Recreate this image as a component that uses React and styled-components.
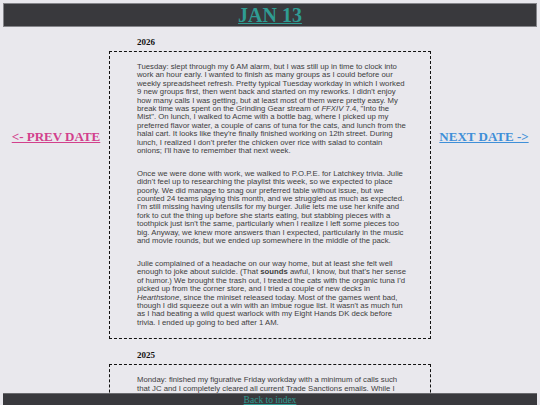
import React from 'react';
import styled, {createGlobalStyle} from 'styled-components';

const entries = [
    {
        year: '2026',
        paragraphs: [
            <>Tuesday: slept through my 6 AM alarm, but I was still up in time to clock into work an hour early. I wanted to finish as many groups as I could before our weekly spreadsheet refresh. Pretty typical Tuesday workday in which I worked 9 new groups first, then went back and started on my reworks. I didn't enjoy how many calls I was getting, but at least most of them were pretty easy. My break time was spent on the Grinding Gear stream of <i>FFXIV</i> 7.4, "Into the Mist". On lunch, I walked to Acme with a bottle bag, where I picked up my preferred flavor water, a couple of cans of tuna for the cats, and lunch from the halal cart. It looks like they're finally finished working on 12th street. During lunch, I realized I don't prefer the chicken over rice with salad to contain onions; I'll have to remember that next week.</>,
            <>Once we were done with work, we walked to P.O.P.E. for Latchkey trivia. Julie didn't feel up to researching the playlist this week, so we expected to place poorly. We did manage to snag our preferred table without issue, but we counted 24 teams playing this month, and we struggled as much as expected. I'm still missing having utensils for my burger. Julie lets me use her knife and fork to cut the thing up before she starts eating, but stabbing pieces with a toothpick just isn't the same, particularly when I realize I left some pieces too big. Anyway, we knew more answers than I expected, particularly in the music and movie rounds, but we ended up somewhere in the middle of the pack.</>,
            <>Julie complained of a headache on our way home, but at least she felt well enough to joke about suicide. (That <b>sounds</b> awful, I know, but that's her sense of humor.) We brought the trash out, I treated the cats with the organic tuna I'd picked up from the corner store, and I tried a couple of new decks in <i>Hearthstone</i>, since the miniset released today. Most of the games went bad, though I did squeeze out a win with an imbue rogue list. It wasn't as much fun as I had beating a wild quest warlock with my Eight Hands DK deck before trivia. I ended up going to bed after 1 AM.</>,
        ],
    },
    {
        year: '2025',
        paragraphs: [
            <>Monday: finished my figurative Friday workday with a minimum of calls such that JC and I completely cleared all current Trade Sanctions emails. While I was waiting on a callback, I started planning out the rest of my week off.</>,
        ],
    },
];

function App() {
    return <>
        <GlobalStyle/>
        <Header>
            <Title href="#">JAN 13</Title>
        </Header>

        <Layout>
            <Side>
                <DateLink href="#" color="#d2408c">&lt;- PREV DATE</DateLink>
            </Side>

            <Entries>
                {entries.map((entry) => (
                    <Entry key={entry.year}>
                        <Year>{entry.year}</Year>
                        <Box>
                            {entry.paragraphs.map((p, i) => <p key={i}>{p}</p>)}
                        </Box>
                    </Entry>
                ))}
            </Entries>

            <Side>
                <DateLink href="#" color="#3f8fd8">NEXT DATE -&gt;</DateLink>
            </Side>
        </Layout>

        <Footer>
            <BackLink href="#">Back to index</BackLink>
        </Footer>
    </>;
}

const GlobalStyle = createGlobalStyle`
  body {
    margin: 0;
    padding: 3px 3px 0;
    background: #e9e8ed;
    font-family: "Liberation Serif", "Times New Roman", serif;
  }
`;

const Header = styled.header`
  height: 22px;
  background: #39393d;
  border: 1px solid #85858a;
  display: flex;
  justify-content: center;
  align-items: center;
`;

const Title = styled.a`
  color: #2f9c93;
  font-size: 20px;
  font-weight: bold;
  line-height: 22px;
  text-decoration-thickness: 1px;
  text-underline-offset: 1px;
`;

const Layout = styled.main`
  display: grid;
  grid-template-columns: 1fr 322px 1fr;
  padding-top: 10px;
`;

const Side = styled.div`
  display: flex;
  justify-content: center;
  padding-top: 92px;
`;

const DateLink = styled.a`
  color: ${props => props.color};
  font-size: 13px;
  font-weight: bold;
  line-height: 15px;
  height: 15px;
  white-space: nowrap;
`;

const Entries = styled.div`
  display: flex;
  flex-direction: column;
  gap: 11px;
  padding-bottom: 30px;
`;

const Entry = styled.section`
  display: flex;
  flex-direction: column;
  gap: 3px;
`;

const Year = styled.div`
  padding-left: 28px;
  font-size: 9px;
  font-weight: bold;
  line-height: 11px;
  color: #111;
`;

const Box = styled.div`
  border: 1px dashed #111;
  padding: 11px 21px 11px 27px;
  font-family: "Liberation Sans", Arial, sans-serif;
  font-size: 7.75px;
  line-height: 8.4px;
  color: #3d3d3d;

  p {
    margin: 0 0 14.4px;
  }

  p:last-child {
    margin-bottom: 0;
  }
`;

const Footer = styled.footer`
  position: fixed;
  left: 3px;
  right: 3px;
  bottom: 0;
  height: 11px;
  background: #39393d;
  border-top: 1px solid #6a6a6e;
  display: flex;
  justify-content: center;
`;

const BackLink = styled.a`
  color: #2f9c93;
  font-size: 9.5px;
  line-height: 13px;
`;

export default App;
